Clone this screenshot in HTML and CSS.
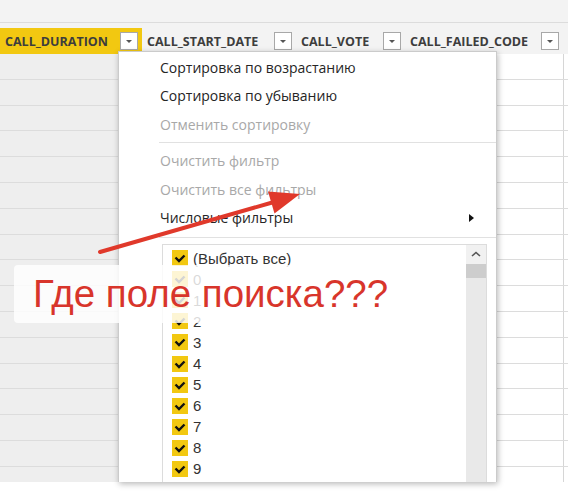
FILE: index.html
```html
<!DOCTYPE html>
<html lang="ru">
<head>
    <meta charset="UTF-8">
    <title>Фильтр столбца</title>
    <link rel="stylesheet" href="styles.css">
</head>
<body>

    <div class="page">
        <div class="head">
            <div class="topbar"></div>
            <div class="header">
                <div class="hcell active w1"><span>CALL_DURATION</span><span class="drop"></span></div>
                <div class="hcell w2"><span>CALL_START_DATE</span><span class="drop"></span></div>
                <div class="hcell w3"><span>CALL_VOTE</span><span class="drop"></span></div>
                <div class="hcell w4"><span>CALL_FAILED_CODE</span><span class="drop"></span></div>
            </div>
        </div>

        <div class="sheet" id="sheet"></div>

        <div class="menu">
            <div class="item">Сортировка по возрастанию</div>
            <div class="item">Сортировка по убыванию</div>
            <div class="item off">Отменить сортировку</div>
            <div class="sep"></div>
            <div class="item off">Очистить фильтр</div>
            <div class="item off">Очистить все фильтры</div>
            <div class="item sub">Числовые фильтры <span class="caret"></span></div>
            <div class="sep last"></div>
            <div class="listbox">
                <div class="values" id="values"></div>
                <div class="scroll">
                    <div class="up">
                        <svg width="10" height="6" viewBox="0 0 10 6"><path d="M1 5 L5 1.5 L9 5" fill="none" stroke="#555" stroke-width="1.6"/></svg>
                    </div>
                    <div class="thumb"></div>
                </div>
            </div>
        </div>

        <div class="callout">Где поле поиска???</div>

        <svg class="arrow" width="568" height="492" viewBox="0 0 568 492">
            <line x1="100" y1="252" x2="274" y2="202" stroke="#e0392b" stroke-width="4" stroke-linecap="round"/>
            <polygon points="300,194 268,191.5 274.5,213.5" fill="#e0392b"/>
        </svg>
    </div>

    <script>
        const sheet = document.getElementById('sheet');
        for (let i = 0; i < 17; i++) {
            const row = document.createElement('div');
            row.className = 'row';
            row.innerHTML = '<div class="cell w1 grey"></div><div class="cell w2"></div><div class="cell w3"></div><div class="cell w4"></div><div class="cell"></div>';
            sheet.appendChild(row);
        }

        const values = document.getElementById('values');
        const labels = ['(Выбрать все)', '0', '1', '2', '3', '4', '5', '6', '7', '8', '9'];
        labels.forEach(label => {
            const line = document.createElement('div');
            line.className = 'value';
            line.innerHTML = '<span class="check"><svg width="16" height="16" viewBox="0 0 16 16"><path d="M3.5 7.5 L7 11 L12.5 5.5" fill="none" stroke="#111" stroke-width="2.4"/></svg></span><span>' + label + '</span>';
            values.appendChild(line);
        });
    </script>

</body>
</html>
```

FILE: styles.css
```css
body {
    margin: 0;
    background-color: #fff;
    font-family: "Open Sans", "Liberation Sans", sans-serif;
}
.page {
    position: relative;
    width: 568px;
    height: 492px;
    overflow: hidden;
}
.head {
    background-color: #f3f3f3;
}
.topbar {
    height: 22px;
    border-bottom: 1px solid #dcdcdc;
    margin-bottom: 5px;
}
.header {
    display: flex;
    height: 26px;
}
.hcell {
    display: flex;
    align-items: center;
    justify-content: space-between;
    box-sizing: border-box;
    padding: 0 4px 0 5px;
    font-size: 12.5px;
    font-weight: bold;
    color: #3d3d3d;
}
.hcell.active {
    background-color: #f2c811;
    padding-right: 4px;
}
.w1 { width: 142px; }
.w2 { width: 154px; }
.w3 { width: 109px; }
.w4 { width: 158px; }
.drop {
    position: relative;
    width: 18px;
    height: 18px;
    box-sizing: border-box;
    background-color: #fff;
    border: 1px solid #a8a8a8;
}
.drop::after {
    content: "";
    position: absolute;
    left: 5px;
    top: 7px;
    border-left: 3px solid transparent;
    border-right: 3px solid transparent;
    border-top: 3px solid #555;
}
.sheet {
    height: 428px;
    overflow: hidden;
}
.row {
    display: flex;
    height: 25.8px;
    box-sizing: border-box;
    border-bottom: 1px solid #dcdcdc;
}
.cell {
    flex: none;
}
.cell:last-child {
    flex: 1;
}
.cell.grey {
    background-color: #eeeeee;
}
.cell.w4 {
    border-right: 1px solid #d6d6d6;
}
.menu {
    position: absolute;
    left: 118px;
    top: 51px;
    width: 379px;
    height: 431px;
    box-sizing: border-box;
    display: flex;
    flex-direction: column;
    padding-top: 1px;
    background-color: #fff;
    border: 1px solid #cbcbcb;
    border-bottom: none;
    box-shadow: 1px 2px 6px rgba(0, 0, 0, 0.28);
}
.item {
    display: flex;
    align-items: center;
    height: 28.5px;
    flex: none;
    padding-left: 41px;
    padding-right: 22px;
    font-size: 14px;
    color: #252525;
}
.item.off {
    color: #a8a8a8;
}
.item.sub {
    justify-content: space-between;
}
.caret {
    border-top: 4px solid transparent;
    border-bottom: 4px solid transparent;
    border-left: 5px solid #111;
}
.sep {
    flex: none;
    height: 1px;
    margin: 3.5px 0 3.5px 40px;
    background-color: #e1e1e1;
}
.sep.last {
    margin: 4.5px 0 6px 40px;
}
.listbox {
    flex: 1;
    display: flex;
    margin: 0 9px 0 43px;
    border: 1px solid #dcdcdc;
    border-bottom: none;
    overflow: hidden;
}
.values {
    flex: 1;
    padding: 3px 0 0 9px;
}
.value {
    display: flex;
    align-items: center;
    gap: 5px;
    height: 21.1px;
    font-family: "Liberation Sans", Arial, sans-serif;
    font-size: 15px;
    color: #333;
}
.check {
    display: block;
    width: 16px;
    height: 16px;
    background-color: #f2c811;
}
.check svg {
    display: block;
}
.scroll {
    width: 20px;
    background-color: #e9e9e9;
}
.up {
    display: flex;
    align-items: center;
    justify-content: center;
    height: 19px;
    background-color: #f1f1f1;
}
.thumb {
    height: 14px;
    background-color: #cdcdcd;
}
.callout {
    position: absolute;
    left: 14px;
    top: 265px;
    width: 386px;
    height: 58px;
    box-sizing: border-box;
    padding-left: 19px;
    line-height: 58px;
    border-radius: 4px;
    background-color: rgba(255, 255, 255, 0.82);
    font-family: "Liberation Sans", Arial, sans-serif;
    font-size: 38.5px;
    color: #d8352b;
    white-space: nowrap;
}
.arrow {
    position: absolute;
    left: 0;
    top: 0;
    pointer-events: none;
}
```
